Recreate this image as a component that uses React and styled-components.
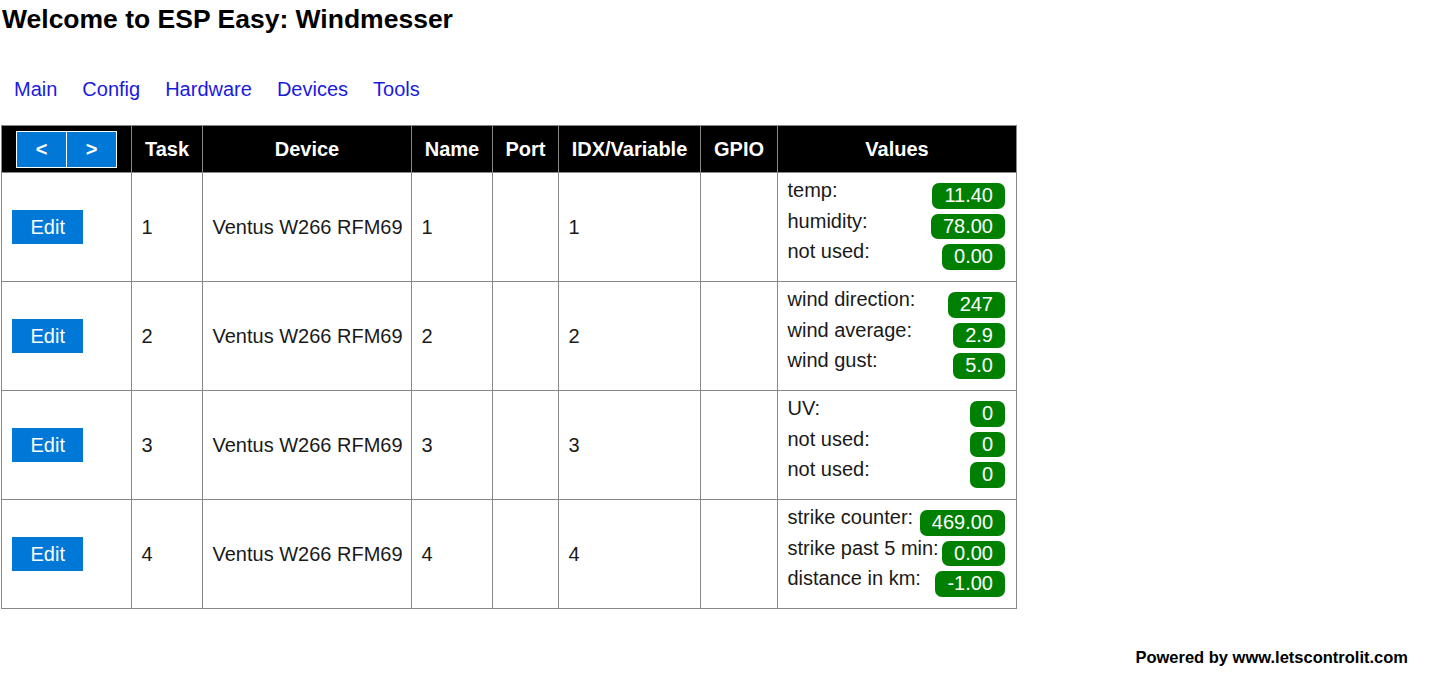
import React from 'react';
import styled, { createGlobalStyle } from 'styled-components';

const GlobalStyle = createGlobalStyle`
    body {
        margin: 0;
        background: #fff;
        font-family: "Liberation Sans", Arial, sans-serif;
        color: #1a1a1a;
    }
`;

const Page = styled.div`
    padding-top: 4px;
`;

const Title = styled.h1`
    margin: 0;
    padding-left: 2px;
    font-size: 26.5px;
    line-height: 30px;
    font-weight: bold;
    color: #000;
`;

const Menu = styled.nav`
    display: flex;
    margin-top: 43.5px;
    padding-left: 1.5px;

    a {
        padding: 0 12.5px;
        font-size: 20px;
        line-height: 23px;
        color: #1a1ae0;
        text-decoration: none;
    }
`;

const Table = styled.table`
    margin: 24.5px 0 0 1px;
    width: 1016px;
    border-collapse: collapse;
    table-layout: fixed;
    font-size: 20px;
`;

const Head = styled.th`
    height: 46px;
    padding: 0;
    background: #000;
    color: #fff;
    font-weight: bold;
    text-align: center;
    border: 1px solid #888;
`;

const Cell = styled.td`
    height: 108px;
    padding: 0 9.5px;
    border: 1px solid #888;
    vertical-align: middle;
    line-height: 23px;
    white-space: nowrap;
`;

const ValuesCell = styled(Cell)`
    height: 91.5px;
    padding: 5px 11px 11.5px 9.5px;
    vertical-align: top;
`;

const Pager = styled.div`
    display: inline-flex;
    vertical-align: middle;
`;

const PageButton = styled.span`
    display: flex;
    align-items: center;
    justify-content: center;
    box-sizing: border-box;
    width: 51px;
    height: 37px;
    background: #0078d7;
    border: 1px solid #fff;
    color: #fff;
    font-weight: bold;
    font-size: 20px;
    & + & {
        margin-left: -1px;
    }
`;

const EditButton = styled.span`
    display: inline-block;
    margin-left: 0.5px;
    padding: 0 18.5px;
    line-height: 34px;
    background: #0078d7;
    color: #fff;
`;

const ValueRow = styled.div`
    display: flex;
    justify-content: space-between;
    align-items: flex-start;
    height: 30.5px;
`;

const Label = styled.span`
    line-height: 25px;
`;

const Badge = styled.span`
    margin-top: 5px;
    padding: 0 12px;
    line-height: 25.5px;
    border-radius: 7px;
    background: #008000;
    color: #fff;
`;

const Footer = styled.footer`
    margin-top: 38.5px;
    padding-right: 37px;
    text-align: right;
    font-size: 16.5px;
    line-height: 19px;
    font-weight: bold;
    color: #000;
`;

const columns = [
    { title: '', width: 130 },
    { title: 'Task', width: 71 },
    { title: 'Device', width: 209 },
    { title: 'Name', width: 81 },
    { title: 'Port', width: 66 },
    { title: 'IDX/Variable', width: 142 },
    { title: 'GPIO', width: 77 },
    { title: 'Values', width: 239 },
];

const tasks = [
    { values: [['temp:', '11.40'], ['humidity:', '78.00'], ['not used:', '0.00']] },
    { values: [['wind direction:', '247'], ['wind average:', '2.9'], ['wind gust:', '5.0']] },
    { values: [['UV:', '0'], ['not used:', '0'], ['not used:', '0']] },
    { values: [['strike counter:', '469.00'], ['strike past 5 min:', '0.00'], ['distance in km:', '-1.00']] },
];

const App = () => {
    return (
        <>
            <GlobalStyle />
            <Page>
                <Title>Welcome to ESP Easy: Windmesser</Title>

                <Menu>
                    <a href="#">Main</a>
                    <a href="#">Config</a>
                    <a href="#">Hardware</a>
                    <a href="#">Devices</a>
                    <a href="#">Tools</a>
                </Menu>

                <Table>
                    <colgroup>
                        {columns.map((c, i) => <col key={i} style={{ width: c.width }} />)}
                    </colgroup>
                    <thead>
                        <tr>
                            <Head>
                                <Pager>
                                    <PageButton>&lt;</PageButton>
                                    <PageButton>&gt;</PageButton>
                                </Pager>
                            </Head>
                            {columns.slice(1).map(c => <Head key={c.title}>{c.title}</Head>)}
                        </tr>
                    </thead>
                    <tbody>
                        {tasks.map((t, i) => (
                            <tr key={i}>
                                <Cell><EditButton>Edit</EditButton></Cell>
                                <Cell>{i + 1}</Cell>
                                <Cell>Ventus W266 RFM69</Cell>
                                <Cell>{i + 1}</Cell>
                                <Cell></Cell>
                                <Cell>{i + 1}</Cell>
                                <Cell></Cell>
                                <ValuesCell>
                                    {t.values.map(([label, value], j) => (
                                        <ValueRow key={j}>
                                            <Label>{label}</Label>
                                            <Badge>{value}</Badge>
                                        </ValueRow>
                                    ))}
                                </ValuesCell>
                            </tr>
                        ))}
                    </tbody>
                </Table>

                <Footer>Powered by www.letscontrolit.com</Footer>
            </Page>
        </>
    );
};

export default App;
